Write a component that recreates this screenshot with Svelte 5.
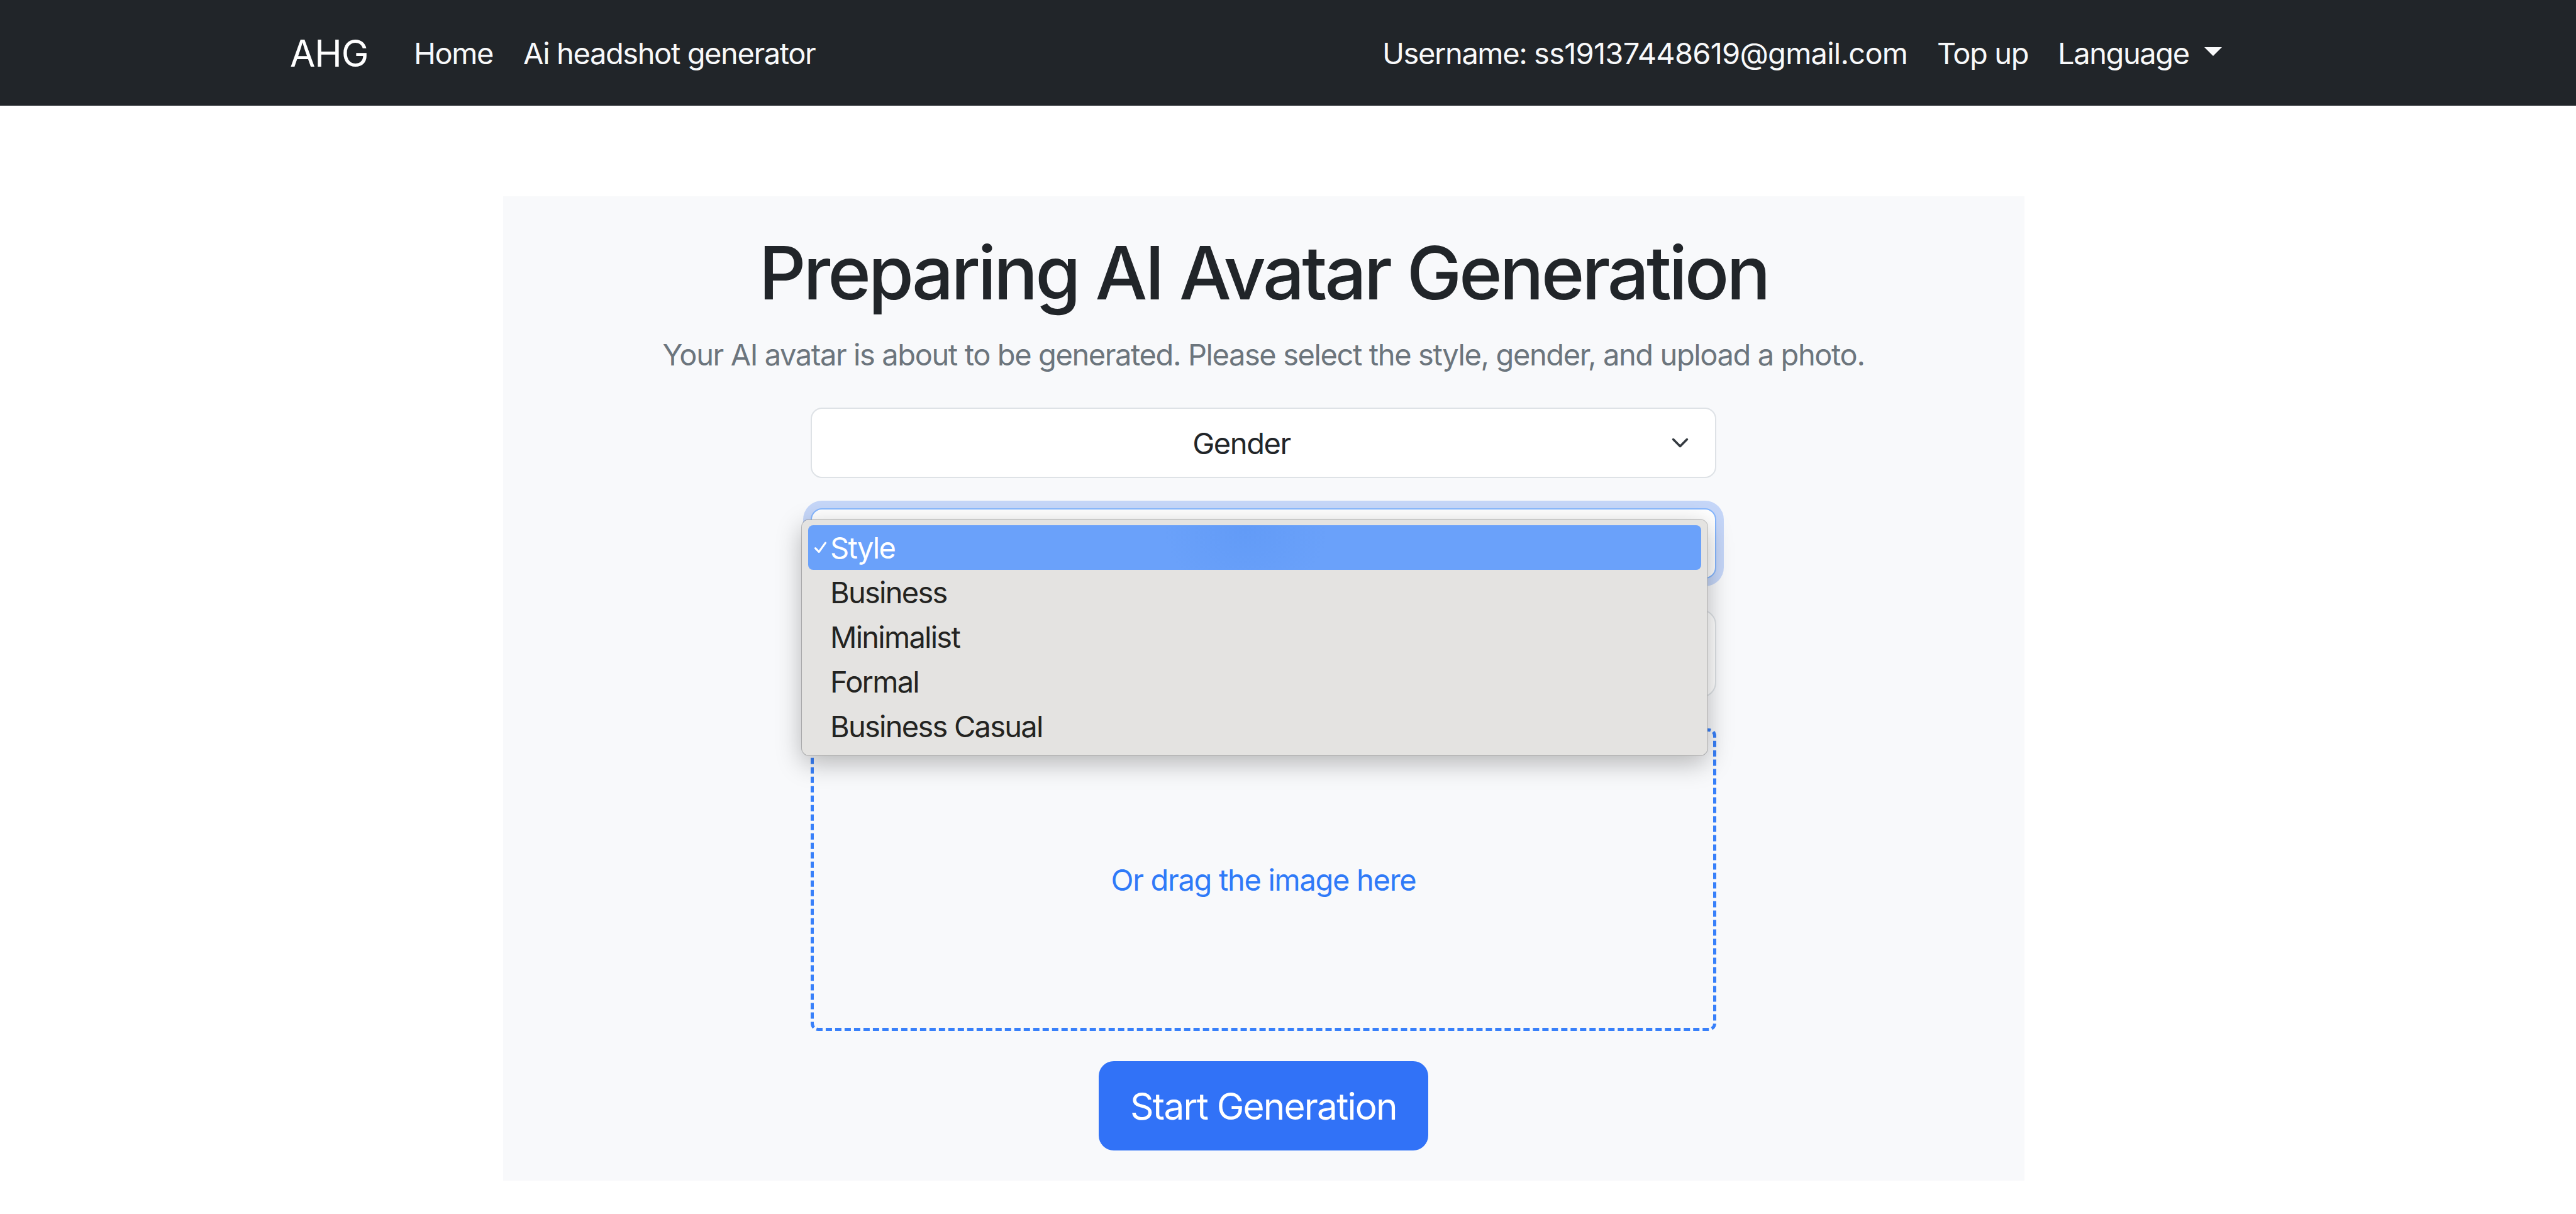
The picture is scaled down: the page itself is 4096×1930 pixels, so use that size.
<script lang="ts">
	const navLinks = ['Home', 'Ai headshot generator'];
	const username = 'ss19137448619@gmail.com';
	const styles = ['Style', 'Business', 'Minimalist', 'Formal', 'Business Casual'];

	let selected = $state('Style');
</script>

<nav class="navbar">
	<a class="brand" href="#top">AHG</a>
	{#each navLinks as link, i}
		<a class="nav-link {i === 0 ? 'home' : 'generator'}" href="#top">{link}</a>
	{/each}
	<span class="nav-link user">Username: <span class="email">{username}</span></span>
	<a class="nav-link topup" href="#top">Top up</a>
	<a class="nav-link language" href="#top">Language</a>
	<span class="caret"></span>
</nav>

<main class="card">
	<h1>Preparing AI Avatar Generation</h1>
	<p class="lead">Your AI avatar is about to be generated. Please select the style, gender, and upload a photo.</p>

	<div class="form">
		<div class="select">
			<span class="value">Gender</span>
			<svg class="chevron" viewBox="0 0 16 16">
				<path d="m2 5 6 6 6-6" />
			</svg>
		</div>

		<div class="select focus">
			<div class="menu">
				{#each styles as style}
					<div class="option" class:active={style === selected}>
						<svg class="check" viewBox="0 0 18 18">
							{#if style === selected}
								<path d="M1.5 10 L6.8 15.5 L16.5 2" />
							{/if}
						</svg>
						<span>{style}</span>
					</div>
				{/each}
			</div>
		</div>

		<div class="file"></div>
		<div class="dropzone">Or drag the image here</div>
		<button class="start">Start Generation</button>
	</div>
</main>

<style>
	:global(body) {
		background: #fff;
		font-family: Inter, sans-serif;
		font-size: 47px;
		font-weight: 430;
		letter-spacing: -1.4px;
		color: #212529;
	}
	.navbar {
		display: flex;
		align-items: center;
		box-sizing: border-box;
		height: 168px;
		padding-left: 461px;
		background: #212529;
		white-space: nowrap;
	}
	.navbar a {
		text-decoration: none;
	}
	.brand {
		width: 197px;
		font-size: 58.5px;
		letter-spacing: -1px;
		color: #fff;
	}
	.nav-link {
		color: #f8f9fa;
	}
	.home {
		width: 174px;
	}
	.generator {
		width: 1366px;
	}
	.user {
		width: 882px;
	}
	.email {
		letter-spacing: -0.75px;
	}
	.topup {
		width: 192px;
	}
	.language {
		width: 233px;
	}
	.caret {
		margin-bottom: 4px;
		border-top: 14.4px solid #f8f9fa;
		border-left: 14.4px solid transparent;
		border-right: 14.4px solid transparent;
	}
	.card {
		display: flex;
		flex-direction: column;
		align-items: center;
		box-sizing: border-box;
		width: 2419px;
		height: 1565px;
		margin: 144px 0 0 800px;
		padding: 50px 1px 0 0;
		background: #f8f9fb;
		white-space: nowrap;
	}
	h1 {
		margin: 0;
		height: 144px;
		line-height: 144px;
		font-size: 117px;
		font-weight: 530;
		letter-spacing: -4.2px;
	}
	.lead {
		margin: 22px 0 0;
		height: 72px;
		line-height: 72px;
		color: #6c757d;
	}
	.form {
		display: flex;
		flex-direction: column;
		align-items: center;
		gap: 48px;
		width: 1440px;
		margin-top: 48px;
	}
	.select,
	.file {
		position: relative;
		box-sizing: border-box;
		width: 1440px;
		height: 112px;
		border: 2px solid #dee2e6;
		border-radius: 18px;
		background: #fff;
	}
	.select {
		display: flex;
		align-items: center;
	}
	.value {
		width: 1366px;
		text-align: center;
	}
	.chevron {
		width: 29px;
		height: 30px;
		fill: none;
		stroke: #343a40;
		stroke-width: 2;
		stroke-linecap: round;
		stroke-linejoin: round;
	}
	.focus {
		border-color: #86b7fe;
		box-shadow: 0 0 0 12px #c5d6f8;
	}
	.file {
		height: 140px;
		margin: 1px 0;
		border-radius: 24px;
	}
	.menu {
		position: absolute;
		z-index: 1;
		top: 16px;
		left: -16px;
		box-sizing: border-box;
		width: 1440px;
		height: 375px;
		padding: 9px 10px;
		border-radius: 12px;
		background: #e4e3e1;
		box-shadow:
			0 0 0 1px rgba(0, 0, 0, 0.22),
			0 12px 40px rgba(0, 0, 0, 0.28);
		letter-spacing: -1.75px;
	}
	.option {
		display: flex;
		align-items: center;
		height: 71px;
		padding-left: 10px;
		border-radius: 8px;
		color: #232321;
	}
	.option.active {
		background: radial-gradient(ellipse 130px 110px at 49% 10%, #629bf7, #6aa1fa);
		color: #fff;
	}
	.check {
		width: 19px;
		height: 19px;
		margin-right: 6px;
		fill: none;
		stroke: #fff;
		stroke-width: 3;
		stroke-linecap: round;
		stroke-linejoin: round;
	}
	.dropzone {
		display: flex;
		align-items: center;
		justify-content: center;
		box-sizing: border-box;
		width: 1440px;
		height: 481px;
		border: 5px dashed #3880fa;
		border-radius: 12px;
		letter-spacing: -1.3px;
		color: #2f7af8;
	}
	.start {
		width: 524px;
		height: 142px;
		padding: 0;
		border: 0;
		border-radius: 24px;
		background: #3172f7;
		font: 430 58.5px Inter, sans-serif;
		letter-spacing: -1.8px;
		color: #fff;
	}
</style>
